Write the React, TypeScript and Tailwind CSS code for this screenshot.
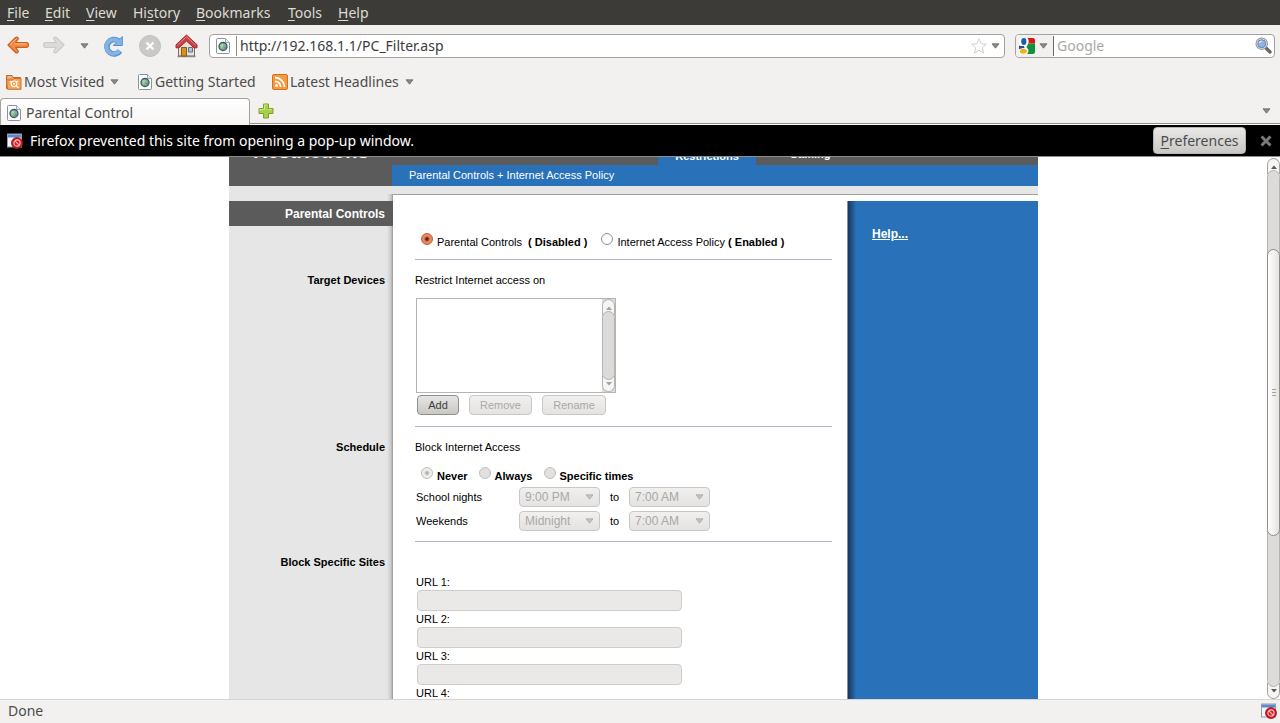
import React, { useState } from 'react';

const MENU = [
  { key: 'F', rest: 'ile', width: 'w-[38px]' },
  { key: 'E', rest: 'dit', width: 'w-[41px]' },
  { key: 'V', rest: 'iew', width: 'w-[47px]' },
  { pre: 'Hi', key: 's', rest: 'tory', width: 'w-[63px]' },
  { key: 'B', rest: 'ookmarks', width: 'w-[92px]' },
  { key: 'T', rest: 'ools', width: 'w-[50px]' },
  { key: 'H', rest: 'elp', width: 'w-[40px]' },
];

const Caret = ({ className = '' }: { className?: string }) => (
  <svg className={className} width="9" height="6" viewBox="0 0 9 6" aria-hidden="true">
    <path d="M1 .8h7L4.500 5.200z" fill="#8a8986" stroke="#6b6a67" strokeWidth=".8" />
  </svg>
);

const PageIcon = () => (
  <svg className="shrink-0" width="14" height="16" viewBox="0 0 14 16" aria-hidden="true">
    <path d="M1.500.5h8l4 4v10a1 1 0 0 1-1 1h-11a1 1 0 0 1-1-1v-13a1 1 0 0 1 1-1z" fill="#fff" stroke="#8a939c" />
    <path d="M9.500.5v4h4" fill="#e6eaee" stroke="#8a939c" strokeWidth=".8" />
    <circle cx="7" cy="8.500" r="4" fill="#86b08d" stroke="#3e5668" strokeWidth="1.300" />
    <path d="M4.200 7.200c1.400-1.800 3-1.600 3.400-.6s-1.500 1.300-1.200 2.700-1 1.200-1.500.3z" fill="#a9d0a6" />
    <path d="M8.200 9.200c1-.6 2-.2 2 .4s-1.200 1.700-1.700 1.400z" fill="#5d86a8" />
  </svg>
);

const PopupIcon = () => (
  <svg className="shrink-0" width="16" height="16" viewBox="0 0 16 16" aria-hidden="true">
    <rect x=".5" y="1" width="14" height="13" fill="#f4f6f9" stroke="#8c9bb0" />
    <path d="M1 1.500h13v3H1z" fill="#5b8bcd" />
    <circle cx="10" cy="10" r="5.500" fill="#cf1a22" stroke="#a30f16" strokeWidth=".8" />
    <circle cx="10" cy="10" r="3.100" fill="none" stroke="#f3c6c6" strokeWidth="1.100" />
    <path d="M7.900 7.900l4.200 4.200" stroke="#f3c6c6" strokeWidth="1.100" />
  </svg>
);

const arrowPath = 'M1 10L8.600 2.500c1.500-1.300 3.400.5 2.300 2L8.600 7.600h10.900c2.600 0 2.600 4.800 0 4.800H8.600l2.300 3.100c1.100 1.500-.8 3.300-2.300 2z';

const BackIcon = () => (
  <svg width="22" height="21" viewBox="0 0 22 21" aria-hidden="true">
    <path d={arrowPath} fill="#f08a48" stroke="#c9601f" strokeWidth="1.200" strokeLinejoin="round" />
    <path d="M3 9.500l6.300-5.800M7.500 8.900h12" stroke="#fbb98a" fill="none" />
  </svg>
);

const ForwardIcon = () => (
  <svg className="-scale-x-100" width="22" height="21" viewBox="0 0 22 21" aria-hidden="true">
    <path d={arrowPath} fill="#dddcda" stroke="#cccbc8" strokeWidth="1.200" strokeLinejoin="round" />
  </svg>
);

const ReloadIcon = () => (
  <svg width="22" height="22" viewBox="0 0 22 22" aria-hidden="true">
    <path d="M15.500 6A7.200 7.200 0 1 0 17 16" fill="none" stroke="#5a90cb" strokeWidth="5.600" />
    <path d="M19.300 1.500v9h-9z" fill="#82b4e8" stroke="#5a90cb" strokeLinejoin="round" />
    <path d="M16 6.800A7.200 7.200 0 1 0 16.600 15.600" fill="none" stroke="#82b4e8" strokeWidth="3.800" />
  </svg>
);

const StopIcon = () => (
  <svg width="22" height="22" viewBox="0 0 22 22" aria-hidden="true">
    <circle cx="11" cy="11" r="10.500" fill="#cbc9c7" stroke="#c0beba" />
    <path d="M7.500 7.500l7 7m0-7l-7 7" stroke="#fff" strokeWidth="2.400" />
  </svg>
);

const HomeIcon = () => (
  <svg width="23" height="24" viewBox="0 0 23 24" aria-hidden="true">
    <path d="M3.500 11v11h16V11l-8-7.500z" fill="#e6e2dc" stroke="#77706b" />
    <path d="M2.500 22.500h18" stroke="#8a8580" strokeWidth="1.500" />
    <path d="M1 13.800v-3L11.500 1 22 10.800v3h-3L11.500 7 4 13.800z" fill="#cf4046" stroke="#a3262d" strokeLinejoin="round" />
    <path d="M2.500 11l9-8.400 9 8.400" fill="none" stroke="#e98285" />
    <path d="M6.500 13.500h5V22h-5z" fill="#d8921f" stroke="#8a5a12" />
    <path d="M13.500 13.500h4v4.500h-4z" fill="#a9c6e3" stroke="#5d6e80" />
  </svg>
);

const FolderIcon = () => (
  <svg className="shrink-0" width="16" height="16" viewBox="0 0 16 16" aria-hidden="true">
    <path d="M.5 14.500v-13h5.500l1 2h7.500v11z" fill="#e8a060" stroke="#c06a2c" />
    <path d="M.5 6h6l1.500-1.500h7v10.800H1.500z" fill="#f5a55c" stroke="#cd6f2a" />
    <path d="M2 3h3.500" stroke="#fbd3ab" />
    <circle cx="8" cy="9.800" r="2.800" fill="#f39a4a" stroke="#fff" strokeWidth="1.100" />
    <circle cx="8" cy="9.800" r="1" fill="#fff" />
    <path d="M10 11.800l2.500 2M4 7l1 1M12 7l-1.500 1" stroke="#fff" strokeWidth="1.100" />
  </svg>
);

const FeedIcon = () => (
  <svg className="shrink-0" width="16" height="16" viewBox="0 0 16 16" aria-hidden="true">
    <rect x=".5" y=".5" width="15" height="15" rx="1.500" fill="#f59a3c" stroke="#d8701a" />
    <circle cx="4.500" cy="11.500" r="1.500" fill="#fff" />
    <path d="M3 7.300A5.700 5.700 0 0 1 8.700 13M3 3.500A9.500 9.500 0 0 1 12.500 13" fill="none" stroke="#fff" strokeWidth="1.800" />
  </svg>
);

const PlusIcon = () => (
  <svg width="17" height="17" viewBox="0 0 17 17" aria-hidden="true">
    <path d="M5.500 1h5v4.500H15v5h-4.500V15h-5v-4.500H1v-5h4.500z" fill="#a9cf48" stroke="#7ba02c" strokeLinejoin="round" />
    <path d="M6.500 6.500V2h3M2 8V6.500h4.500M10.500 6.500H14" fill="none" stroke="#cfe78a" />
  </svg>
);

const StarIcon = () => (
  <svg width="16" height="16" viewBox="0 0 16 16" aria-hidden="true">
    <path d="M8 .8l2.100 4.900 5.200.5-3.900 3.500 1.100 5.300L8 12.300 3.500 15l1.100-5.300L.7 6.200l5.200-.5z" fill="#fff" stroke="#cfcecc" strokeLinejoin="round" />
  </svg>
);

const GoogleIcon = () => (
  <svg width="16" height="16" viewBox="0 0 16 16" aria-hidden="true">
    <path d="M0 0h16v16H0z" fill="#fff" />
    <path d="M8.500 0H14a2 2 0 0 1 2 2v3.500H9.500C10 3 9.500 1 8.500 0z" fill="#e01217" />
    <path d="M9 5.500h7V14a2 2 0 0 1-2 2H8c2.500-3 1.500-5-.5-6.500 0-1.500 1.500-2 1.500-4z" fill="#10923c" />
    <ellipse cx="4.800" cy="3.500" rx="2.600" ry="3.400" fill="#1a5bb8" />
    <path d="M0 7.500c2 .8 3.500.7 5 .5l.5 2C3 10 1.200 10.500 0 11.500z" fill="#24489c" />
    <ellipse cx="4.300" cy="13.300" rx="3.500" ry="2.500" fill="#efb21c" />
  </svg>
);

const SearchIcon = () => (
  <svg width="17" height="17" viewBox="0 0 17 17" aria-hidden="true">
    <path d="M10.500 10.500l4.500 4.500" stroke="#6a6966" strokeWidth="3.400" strokeLinecap="round" />
    <circle cx="6.700" cy="6.700" r="5.700" fill="#eef1f4" stroke="#8f9499" strokeWidth="1.100" />
    <circle cx="6.700" cy="6.700" r="4" fill="#8fb4e2" stroke="#5a84bd" />
    <path d="M4.300 6.200c.4-1.400 1.500-2 3-2" stroke="#d5e4f5" strokeWidth="1.200" fill="none" />
  </svg>
);

const SmallArrow = ({ up = false, light = false }: { up?: boolean; light?: boolean }) => (
  <svg width="6" height="4" viewBox="0 0 6 4" aria-hidden="true">
    <path d={up ? 'M0 4h6L3 .5z' : 'M0 0h6L3 3.500z'} fill={light ? '#a5a4a2' : '#5a5957'} />
  </svg>
);

const Hr = () => <hr className="border-0 h-px bg-[#b4b4d2] w-[417px]" />;

type RadioProps = {
  name: string;
  checked: boolean;
  onChange?: () => void;
  disabled?: boolean;
  children: React.ReactNode;
};

const Radio = ({ name, checked, onChange, disabled, children }: RadioProps) => (
  <label className="flex items-start gap-1">
    <input
      type="radio"
      name={name}
      checked={checked}
      disabled={disabled}
      onChange={() => onChange?.()}
      className="appearance-none shrink-0 w-3 h-3 rounded-full border border-[#8f8e8c] bg-white checked:border-[#b8603c] checked:bg-[radial-gradient(circle,#5a2413_1px,#f0875c_3px)] disabled:border-[#c0bfbd] disabled:bg-[#e2dfde] disabled:checked:border-[#c0bfbd] disabled:checked:bg-[radial-gradient(circle,#b5b4b2_1px,#efeeed_3px)]"
    />
    <span className="pt-px whitespace-pre">{children}</span>
  </label>
);

const TimeSelect = ({ label, value }: { label: string; value: string }) => (
  <div className="relative w-[81px]">
    <select
      aria-label={label}
      disabled
      defaultValue={value}
      className="appearance-none block w-full h-5 pl-[5px] rounded border border-[#c9c7c5] bg-linear-to-b from-[#f1f0ef] to-[#e4e3e1] text-xs text-[#a9a8a6] opacity-100"
    >
      <option>{value}</option>
    </select>
    <svg className="absolute right-1.5 top-[7px] pointer-events-none" width="9" height="6" viewBox="0 0 9 6" aria-hidden="true">
      <path d="M1 .8h7L4.500 5.200z" fill="#c4c3c1" stroke="#aaa9a7" strokeWidth=".8" />
    </svg>
  </div>
);

type SectionProps = { title: string; children: React.ReactNode };

const Section = ({ title, children }: SectionProps) => (
  <section className="flex">
    <h2 className="w-[164px] shrink-0 pt-3 pr-2 text-right font-bold bg-[linear-gradient(to_right,#e6e6e6_158px,#c8c8c8_162px,#969696_164px)]">
      {title}
    </h2>
    <div className="flex-1 pl-[22px]">{children}</div>
  </section>
);

const buttonClass =
  'h-5 rounded border border-[#8f8e8c] bg-linear-to-b from-[#e6e5e3] to-[#c9c8c5] text-[#3c3c3c] disabled:border-[#c9c7c5] disabled:from-[#f1f0ef] disabled:to-[#e4e3e1] disabled:text-[#a9a8a6]';

const App: React.FC = () => {
  const [mode, setMode] = useState('parental');
  const [address, setAddress] = useState('http://192.168.1.1/PC_Filter.asp');

  return (
    <div className="flex flex-col h-screen overflow-hidden bg-[#f2f1f0] text-[#3c3c3c] text-sm font-['Noto_Sans','Open_Sans',sans-serif]">
      {/* Menu bar */}
      <nav className="flex items-center shrink-0 h-[25px] pl-[7px] bg-[#3c3b37] text-[#dfdbd2]">
        {MENU.map((item) => (
          <button key={item.key + item.rest} className={`text-left ${item.width}`}>
            {item.pre}
            <span className="underline underline-offset-2 decoration-1">{item.key}</span>
            {item.rest}
          </button>
        ))}
      </nav>

      {/* Navigation toolbar */}
      <div className="flex items-center shrink-0 h-[41px] pl-[7px] pr-[5px]">
        <button aria-label="Back"><BackIcon /></button>
        <button aria-label="Forward" className="ml-3.5"><ForwardIcon /></button>
        <button aria-label="History" className="ml-[15px]"><Caret /></button>
        <button aria-label="Reload" className="ml-3.5"><ReloadIcon /></button>
        <button aria-label="Stop" className="ml-3.5"><StopIcon /></button>
        <button aria-label="Home" className="ml-3.5 mr-[11px]"><HomeIcon /></button>
        <div className="flex items-center flex-1 h-6 px-1.5 bg-white border border-[#a5a29e] rounded">
          <PageIcon />
          <div className="w-px h-5 ml-1.5 mr-[3px] bg-[#8f8e8c]" />
          <input
            aria-label="Address"
            value={address}
            onChange={(e) => setAddress(e.target.value)}
            className="flex-1 min-w-0 outline-none"
          />
          <button aria-label="Bookmark this page"><StarIcon /></button>
          <button aria-label="Show history" className="ml-1 -mr-0.5"><Caret /></button>
        </div>
        <div className="flex items-center w-[260px] h-6 ml-2.5 bg-white border border-[#a5a29e] rounded overflow-hidden">
          <button aria-label="Search engine" className="flex items-center gap-1 h-full pl-[3px] pr-[5px] bg-[#f2f1f0]">
            <GoogleIcon />
            <Caret />
          </button>
          <div className="w-px h-5 bg-[#6b6a67]" />
          <input aria-label="Search" placeholder="Google" className="flex-1 min-w-0 pl-[3px] outline-none placeholder:text-[#a9a8a6]" />
          <button aria-label="Search" className="mr-0.5"><SearchIcon /></button>
        </div>
      </div>

      {/* Bookmarks */}
      <div className="flex items-center shrink-0 h-8 pl-1.5 text-[#4c4c4c]">
        <button className="flex items-center gap-0.5 w-[132px]">
          <FolderIcon />
          <span>Most Visited</span>
          <Caret className="ml-1" />
        </button>
        <button className="flex items-center gap-[3px] w-[134px]">
          <PageIcon />
          <span>Getting Started</span>
        </button>
        <button className="flex items-center gap-0.5">
          <FeedIcon />
          <span>Latest Headlines</span>
          <Caret className="ml-1" />
        </button>
      </div>

      {/* Tabs */}
      <div className="flex shrink-0 h-[27px]">
        <button className="flex items-center gap-[5px] w-[250px] pl-1.5 pt-px text-[#4c4c4c] bg-linear-to-b from-white to-[#f6f5f4] border border-b-0 border-[#a5a29e] rounded-t">
          <PageIcon />
          Parental Control
        </button>
        <div className="flex flex-1 items-center justify-between pl-2 pr-[9px] border-b border-white shadow-[inset_0_-1px_0_#8f8e8c]">
          <button aria-label="New tab"><PlusIcon /></button>
          <button aria-label="List all tabs"><Caret /></button>
        </div>
      </div>

      {/* Pop-up notification */}
      <div className="flex items-center shrink-0 h-8 pl-[7px] pr-2 bg-black text-white border-b border-[#8f8e8c]">
        <PopupIcon />
        <span className="flex-1 pl-[7px]">Firefox prevented this site from opening a pop-up window.</span>
        <button className="w-[93px] h-[27px] rounded border border-[#b5b4b2] bg-linear-to-b from-[#e9e8e7] to-[#c9c8c5] text-[#4c4c4c]">
          <span className="underline underline-offset-2 decoration-1">P</span>references
        </button>
        <button aria-label="Close" className="ml-3.5">
          <svg width="12" height="12" viewBox="0 0 12 12" aria-hidden="true">
            <path d="M1.500 1.500l9 9m0-9l-9 9" stroke="#7b7a78" strokeWidth="3" />
          </svg>
        </button>
      </div>

      {/* Page */}
      <div className="flex flex-1 min-h-0 bg-white">
        <main className="flex-1 overflow-hidden text-black text-[11px] leading-4 font-['Liberation_Sans',Arial,sans-serif]">
          <div className="w-[809px] mx-auto -mt-7">
            <header className="flex h-[57px] text-white bg-[#5b5b5b]">
              <h1 className="w-[163px] pl-6 pt-2.5 text-xl leading-6 font-bold">Restrictions</h1>
              <div className="flex-1">
                <div className="flex h-9 pl-[266px] font-bold">
                  <a href="#restrictions" className="w-[98px] pt-[19px] text-center bg-[#2971b9]">Restrictions</a>
                  <a href="#gaming" className="w-[108px] pt-[17px] text-center">Gaming</a>
                </div>
                <div className="h-[21px] pl-[17px] pt-0.5 bg-[#2971b9]">
                  <a href="#policy">Parental Controls + Internet Access Policy</a>
                </div>
              </div>
            </header>
            <div className="h-2 bg-[#e6e6e6]" />
            <div className="flex h-[7px]">
              <div className="w-[164px] bg-[linear-gradient(to_right,#e6e6e6_158px,#c8c8c8_162px,#969696_164px)]" />
              <div className="flex-1 border-t border-[#a0a0a0]" />
            </div>

            <div className="flex">
              <div className="flex-1">
                <div className="flex h-[58px]">
                  <div className="w-[164px] bg-[linear-gradient(to_right,#e6e6e6_158px,#c8c8c8_162px,#969696_164px)]">
                    <h2 className="h-[25px] pr-2 pt-[5px] text-right text-xs leading-4 font-bold text-white bg-[#5b5b5b]">Parental Controls</h2>
                  </div>
                  <div className="flex gap-3.5 pl-7 pt-8">
                    <Radio name="mode" checked={mode === 'parental'} onChange={() => setMode('parental')}>
                      Parental Controls  <b>( Disabled )</b>
                    </Radio>
                    <Radio name="mode" checked={mode === 'policy'} onChange={() => setMode('policy')}>
                      Internet Access Policy <b>( Enabled )</b>
                    </Radio>
                  </div>
                </div>
                <div className="flex">
                  <div className="w-[164px] bg-[linear-gradient(to_right,#e6e6e6_158px,#c8c8c8_162px,#969696_164px)]" />
                  <div className="pl-[22px]"><Hr /></div>
                </div>

                <Section title="Target Devices">
                  <label htmlFor="devices" className="block pt-3">Restrict Internet access on</label>
                  <div className="flex w-[200px] h-[95px] mt-2.5 ml-px border border-[#b5b4b2]">
                    <select id="devices" multiple className="appearance-none flex-1 bg-white outline-none" />
                    <div className="flex flex-col items-center w-[13px] bg-[#dcdbd9]">
                      <div className="flex items-center justify-center w-full h-4 bg-[#f6f5f4] border border-b-0 border-[#b5b4b2] rounded-t-full"><SmallArrow up light /></div>
                      <div className="relative flex-1 w-full -my-1 bg-[#dcdbd9] border border-[#b5b4b2] rounded-full" />
                      <div className="flex items-center justify-center w-full h-4 bg-[#f6f5f4] border border-t-0 border-[#b5b4b2] rounded-b-full"><SmallArrow light /></div>
                    </div>
                  </div>
                  <div className="flex gap-2.5 mt-0.5 mb-[11px] ml-0.5">
                    <button className={`w-[42px] ${buttonClass}`}>Add</button>
                    <button disabled className={`w-[63px] ${buttonClass}`}>Remove</button>
                    <button disabled className={`w-[64px] ${buttonClass}`}>Rename</button>
                  </div>
                  <Hr />
                </Section>

                <Section title="Schedule">
                  <p className="pt-3">Block Internet Access</p>
                  <div className="flex gap-[11px] pl-1.5 pt-3 font-bold">
                    <Radio name="schedule" disabled checked>Never</Radio>
                    <Radio name="schedule" disabled checked={false}>Always</Radio>
                    <Radio name="schedule" disabled checked={false}>Specific times</Radio>
                  </div>
                  <div className="grid grid-cols-[103px_81px_29px_81px] gap-y-1 pl-px pt-[3px] pb-2.5 items-center">
                    <span>School nights</span>
                    <TimeSelect label="School nights from" value="9:00 PM" />
                    <span className="text-center">to</span>
                    <TimeSelect label="School nights to" value="7:00 AM" />
                    <span>Weekends</span>
                    <TimeSelect label="Weekends from" value="Midnight" />
                    <span className="text-center">to</span>
                    <TimeSelect label="Weekends to" value="7:00 AM" />
                  </div>
                  <Hr />
                </Section>

                <Section title="Block Specific Sites">
                  <div className="pt-8 pl-px">
                    {[1, 2, 3, 4].map((n) => (
                      <label key={n} className="block">
                        URL {n}:
                        <input disabled className="block w-[265px] h-[21px] ml-px rounded border border-[#cfcdca] bg-[#eae9e7]" />
                      </label>
                    ))}
                  </div>
                </Section>
              </div>

              <aside className="w-[191px] pl-[25px] pt-[25px] bg-[linear-gradient(to_right,#8c8c8c_1px,#17365c_1px,#2971b9_9px)]">
                <a href="#help" className="text-xs leading-4 font-bold text-white underline">Help...</a>
              </aside>
            </div>
          </div>
        </main>

        {/* Scrollbar */}
        <div className="flex flex-col shrink-0 w-[13px] pt-px">
          <div className="flex items-center justify-center h-4 bg-[#f6f5f4] border border-b-0 border-[#a5a29e] rounded-t-full"><SmallArrow up /></div>
          <div className="relative flex flex-col flex-1 -my-1 bg-[#dcdbd9] border border-[#b5b4b2] rounded-full">
            <div className="flex-[78]" />
            <div className="flex flex-col flex-[287] items-center justify-center gap-0.5 -mx-px bg-linear-to-r from-white to-[#e4e3e1] border border-[#8f8e8c] rounded-full">
              <div className="w-1 h-px bg-[#a5a29e]" />
              <div className="w-1 h-px bg-[#a5a29e]" />
              <div className="w-1 h-px bg-[#a5a29e]" />
            </div>
            <div className="flex-[151]" />
          </div>
          <div className="flex items-center justify-center h-4 bg-[#f6f5f4] border border-t-0 border-[#a5a29e] rounded-b-full"><SmallArrow /></div>
        </div>
      </div>

      {/* Status bar */}
      <footer className="flex items-center justify-between shrink-0 h-6 pl-2 pr-[3px] pb-0.5 border-t border-[#d6d4d2] text-[#4c4c4c]">
        <span>Done</span>
        <PopupIcon />
      </footer>
    </div>
  );
};

export default App;
